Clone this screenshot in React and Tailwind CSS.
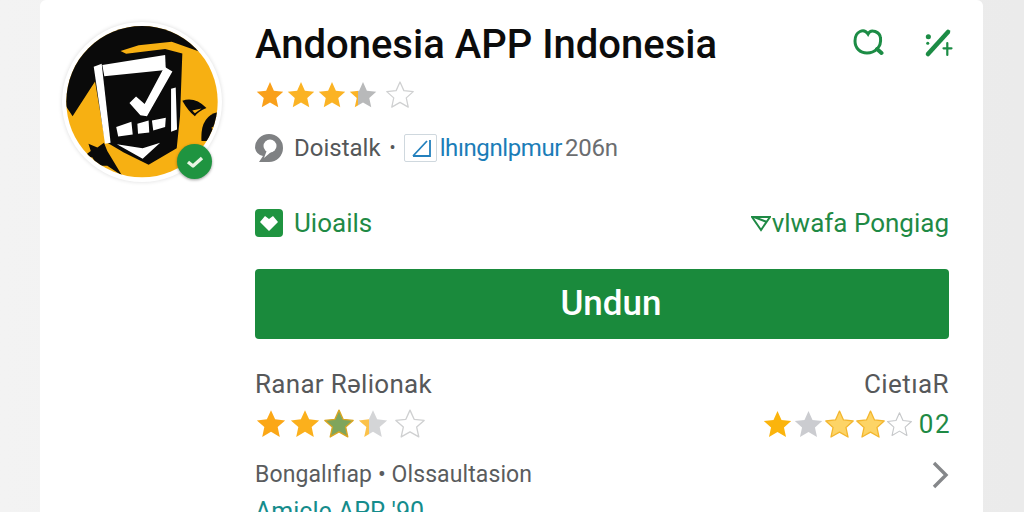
import React from 'react';

const STAR = 'M12 1.6l3.1 6.9 7.5.8-5.6 5 1.6 7.4L12 17.9l-6.6 3.8L7 14.3l-5.6-5 7.5-.8z';

// part: how much of the star is filled from the left, 0 to 1
const Star = ({ id, size = 30, color = '#f9a11b', rest = '#ffffff', edge, part = 1 }) => (
    <svg width={size} height={size} viewBox="0 0 24 24" className="shrink-0">
        <defs>
            <linearGradient id={id}>
                <stop offset={part} stopColor={color} />
                <stop offset={part} stopColor={rest} />
            </linearGradient>
        </defs>
        <path d={STAR} fill={`url(#${id})`} stroke={edge || 'none'} strokeWidth="1" strokeLinejoin="round" />
    </svg>
);

const AppLogo = () => (
    <div className="relative w-[160px] h-[160px] shrink-0 rounded-full bg-white shadow-[0_0_4px_rgba(0,0,0,0.14)]">
        <svg viewBox="68 60 484 484" className="w-full h-full">
            <defs>
                <clipPath id="logoClip"><circle cx="310" cy="301" r="229" /></clipPath>
            </defs>
            <g clipPath="url(#logoClip)">
                <rect x="68" y="60" width="484" height="484" fill="#f7b012" />
                {/* dark backdrop and shield */}
                <path d="M70 300 L70 60 L500 60 L485 150 L400 120 L300 130 L245 148 L262 156 L380 142 L432 155 L425 345 L415 442 L330 492 L255 455 L205 425 L195 400 L168 240 L100 345 Z" fill="#0a0a0a" />
                <path d="M148 428 L175 440 L195 425 L205 450 L250 525 L205 495 L175 495 L160 470 L135 465 L155 450 Z" fill="#0a0a0a" />
                <path d="M432 298 Q470 285 505 320 Q480 330 470 345 Q450 330 432 298 Z" fill="#0a0a0a" />
                <path d="M462 328 L490 322 L470 336 Z" fill="#f7b012" />
                <path d="M490 420 Q485 345 540 332 L540 420 Z" fill="#0a0a0a" />
                <path d="M520 380 L535 372 L530 395 Z" fill="#f7b012" />
                {/* clipboard */}
                <path d="M190 190 L380 160 L382 205 L196 224 Z" fill="#fff" />
                <path d="M164 195 L188 186 L215 425 L198 428 Z" fill="#fff" />
                <path d="M398 262 L412 258 L416 385 L398 392 Z" fill="#fff" />
                <path d="M272 305 L292 285 L318 308 L378 195 L402 210 L325 345 L305 342 Z" fill="#fff" />
                <path d="M232 378 L278 362 L282 400 L238 406 Z M296 368 L330 358 L332 394 L298 398 Z M340 358 L382 350 L380 378 L344 388 Z" fill="#fff" />
                <path d="M234 430 L312 442 L365 425 L312 474 Z" fill="#fff" />
            </g>
        </svg>
        <div className="absolute left-[115px] top-[122px] w-[35px] h-[35px] rounded-full bg-[#1f9440] flex items-center justify-center shadow-[0_1px_3px_rgba(0,0,0,0.4)]">
            <svg width="18" height="14" viewBox="0 0 18 14">
                <path d="M2 7l5 4 9-8" fill="none" stroke="#e9f5e4" strokeWidth="3.4" strokeLinejoin="round" />
            </svg>
        </div>
    </div>
);

const SearchIcon = () => (
    <svg width="32" height="32" viewBox="0 0 32 32" fill="none" stroke="#1c8c45" strokeLinecap="round">
        <path d="M16 8C12 2 3 5 3 15c0 7 5 12 12 12 5 0 8-2 10-4 3-3 4-7 3.500-11C28 6 19 2 16 8z" strokeWidth="3" />
        <path d="M25 23l4.500 4" strokeWidth="4" />
    </svg>
);

const WandIcon = () => (
    <svg width="32" height="32" viewBox="0 0 32 32" fill="none" stroke="#1c8c45" strokeLinecap="round">
        <path d="M6 28L26 6" strokeWidth="4.500" />
        <path d="M6.300 10.700h.1" strokeWidth="5" />
        <path d="M5.700 17.300h.1" strokeWidth="3" />
        <path d="M25.300 17v12M21.500 22.300h8" strokeWidth="2.200" />
    </svg>
);

const ShieldBadge = () => (
    <div className="w-7 h-7 rounded-[4px] bg-[#1f9440] flex items-center justify-center">
        <svg width="20" height="18" viewBox="0 0 20 18">
            <path d="M1 8l5-6 4 3 4-3 5 6-9 9z" fill="#fff" />
        </svg>
    </div>
);

const MetaBlock = () => (
    <svg width="28" height="28" viewBox="0 0 28 28">
        <path d="M14 0a14 14 0 0 1 0 28H4l4-6a10 10 0 0 1-8-8A14 14 0 0 1 14 0z" fill="#7f8183" />
        <circle cx="15" cy="12" r="6.500" fill="#fff" />
        <path d="M12 16l-3 8 7-6z" fill="#fff" />
    </svg>
);

export default function App() {
    return (
        <div
            className="w-[1024px] h-[512px] overflow-hidden bg-gradient-to-r from-[#f3f3f3] to-[#ebebeb] pl-[40px] pr-[41px]"
            style={{ fontFamily: 'Roboto, "Noto Sans", sans-serif' }}
        >
            <div className="h-[540px] bg-white rounded-t-[6px] flex pl-[22px] pr-[34px] pt-[22px] gap-[33px]">
                <AppLogo />

                <div className="flex-1 flex flex-col min-w-0">
                    <div className="flex items-center justify-between h-[46px]">
                        <h1 className="text-[40px] leading-[46px] font-medium text-[#0c0c0c]">Andonesia APP Indonesia</h1>
                        <div className="flex items-center gap-[38px] mr-[-5px] mb-[6px]">
                            <SearchIcon />
                            <WandIcon />
                        </div>
                    </div>

                    <div className="flex items-center gap-[1px] mt-[12px] h-[30px]">
                        <Star id="top1" color="#f9a01a" />
                        <Star id="top2" color="#fbb324" />
                        <Star id="top3" color="#fbb324" />
                        <Star id="top4" color="#fbb324" rest="#b8b9ba" part={0.32} />
                        <div className="ml-[6px]"><Star id="top5" color="#fff" edge="#cfd0d1" /></div>
                    </div>

                    <div className="flex items-center mt-[24px] h-[28px] text-[24px] leading-[28px] text-[#555759]">
                        <MetaBlock />
                        <span className="ml-[11px]">Doistalk</span>
                        <span className="ml-[9px] text-[18px]">•</span>
                        <div className="ml-[8px] flex items-center border border-[#cfd8de] rounded-[2px] h-[28px] w-[33px] pl-[7px] shrink-0">
                            <svg width="20" height="20" viewBox="0 0 20 20" fill="none" stroke="#2380bd" strokeWidth="1.800">
                                <path d="M1 18L15 3M1 18h17V2" />
                            </svg>
                        </div>
                        <span className="ml-[3px] text-[#1b7db8] tracking-[-0.4px]">lhıngnlpmur</span>
                        <span className="ml-[3px] text-[#6b6d70] tracking-[-0.2px]">206n</span>
                    </div>

                    <div className="flex items-center justify-between mt-[46px] h-[30px]">
                        <div className="flex items-center gap-[11px] text-[26px] text-[#1f8a45]">
                            <ShieldBadge />
                            <span>Uioails</span>
                        </div>
                        <div className="flex items-center text-[26px] text-[#1f8a45]">
                            <svg width="20" height="20" viewBox="0 0 20 20" fill="none" stroke="#1f8a45" strokeWidth="2" className="mr-[1px]">
                                <path d="M1 4h18L10 17zM3 4l13 5" />
                            </svg>
                            <span>vlwafa Pongiag</span>
                        </div>
                    </div>

                    <button className="mt-[31px] h-[70px] w-full shrink-0 rounded-[4px] bg-[#1a8a3c] text-white text-[35px] font-medium flex items-center justify-center pl-[18px]">
                        Undun
                    </button>

                    <div className="flex items-center justify-between mt-[31px] h-[28px] text-[26px] leading-[28px] text-[#56585a]">
                        <span className="tracking-[0.3px]">Ranar Rəlionak</span>
                        <span className="tracking-[0.4px]">CietıaR</span>
                    </div>

                    <div className="flex items-center justify-between mt-[11px] h-[30px]">
                        <div className="flex items-center gap-[2px]">
                            <Star id="low1" size={32} color="#fba716" />
                            <Star id="low2" size={32} color="#fbb01c" />
                            <Star id="low3" size={32} color="#7fa55c" edge="#d9a521" />
                            <Star id="low4" size={32} color="#fbc24a" rest="#d4d5d7" part={0.35} />
                            <div className="ml-[3px]"><Star id="low5" size={32} color="#fff" edge="#cfd0d1" /></div>
                        </div>
                        <div className="flex items-center">
                            <Star id="sum1" size={31} color="#fbb40c" />
                            <Star id="sum2" size={31} color="#cbccd0" />
                            <Star id="sum3" size={31} color="#fdd466" edge="#f3b62e" />
                            <Star id="sum4" size={31} color="#fdd466" edge="#f3b62e" />
                            <Star id="sum5" size={27} color="#fff" edge="#c6c8ca" />
                            <span className="ml-[6px] mr-[-2px] text-[26px] text-[#1f8a45] tracking-[1.5px]">02</span>
                        </div>
                    </div>

                    <div className="flex items-center justify-between mt-[21px] h-[30px]">
                        <span className="text-[23px] text-[#5a5c5e] tracking-[0.1px]">Bongalıfıap • Olssaultasion</span>
                        <svg width="18" height="28" viewBox="0 0 18 28" fill="none" stroke="#85878a" strokeWidth="3.400">
                            <path d="M3 2l12 12L3 26" />
                        </svg>
                    </div>

                    <div className="mt-[7px] text-[25px] leading-[30px] text-[#158c8c]">Amicle APR &apos;90</div>
                </div>
            </div>
        </div>
    );
}
